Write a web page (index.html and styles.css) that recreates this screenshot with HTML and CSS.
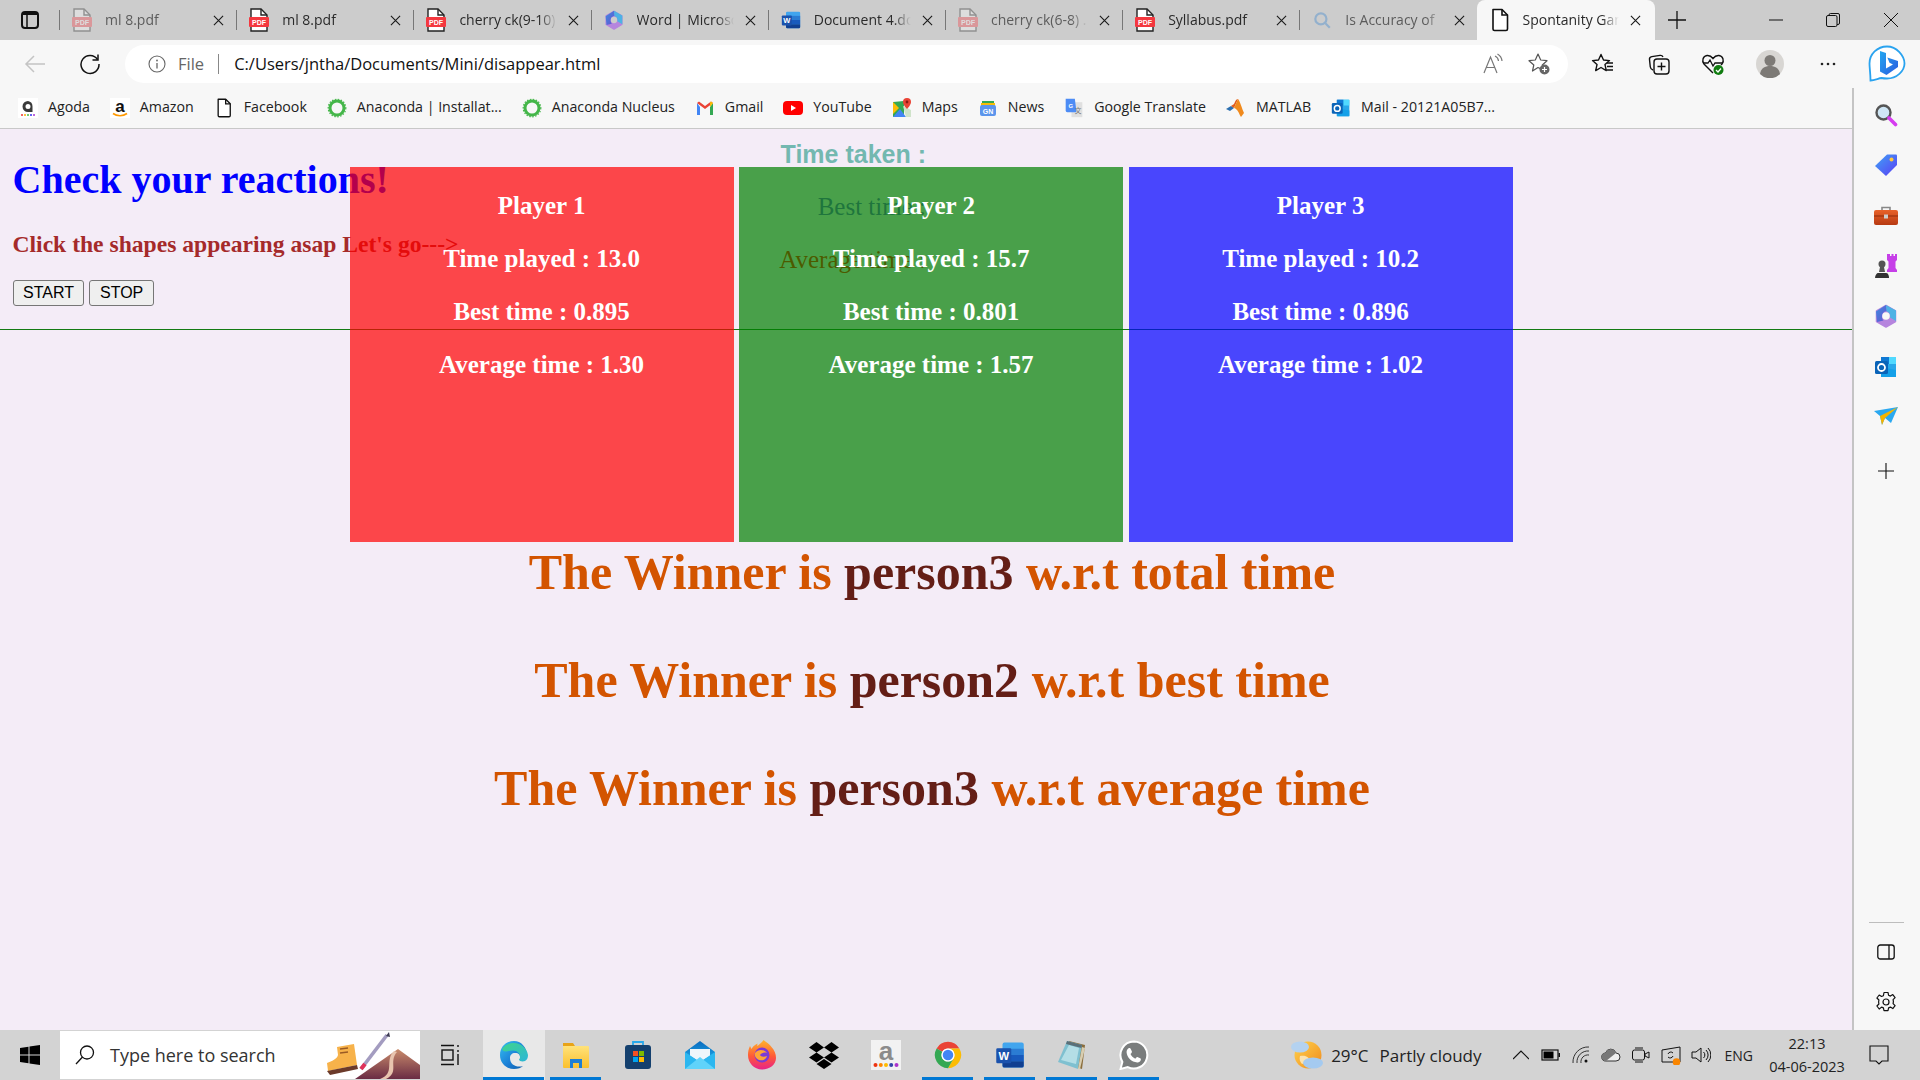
FILE: index.html
```html
<!DOCTYPE html>
<html lang="en">
<head>
<meta charset="utf-8">
<title>Spontanity Game</title>
<link rel="stylesheet" href="styles.css">
</head>
<body>
<svg class="defs" aria-hidden="true">
  <defs>
    <linearGradient id="g-edge" x1="0" y1="0" x2="1" y2="1"><stop offset="0" stop-color="#35c1f1"/><stop offset=".55" stop-color="#1b7fd6"/><stop offset="1" stop-color="#0c59a4"/></linearGradient>
    <linearGradient id="g-edge2" x1="0" y1="0" x2="1" y2="1"><stop offset="0" stop-color="#3fd58a"/><stop offset="1" stop-color="#2bb6d8"/></linearGradient>
    <linearGradient id="g-bing" x1="0" y1="0" x2="1" y2="1"><stop offset="0" stop-color="#22a7f0"/><stop offset="1" stop-color="#2a5be0"/></linearGradient>
    <linearGradient id="g-tag" x1="0" y1="0" x2="1" y2="1"><stop offset="0" stop-color="#3fa4f5"/><stop offset="1" stop-color="#5a3df5"/></linearGradient>
    <linearGradient id="g-box" x1="0" y1="0" x2="0" y2="1"><stop offset="0" stop-color="#e8622a"/><stop offset="1" stop-color="#b73a12"/></linearGradient>
    <linearGradient id="g-fx" x1="0" y1="0" x2="0" y2="1"><stop offset="0" stop-color="#ffb52e"/><stop offset=".55" stop-color="#ff5a36"/><stop offset="1" stop-color="#e8228a"/></linearGradient>
    <linearGradient id="g-mail" x1="0" y1="0" x2="0" y2="1"><stop offset="0" stop-color="#0a6cc0"/><stop offset="1" stop-color="#28c0f5"/></linearGradient>
    <linearGradient id="g-folder" x1="0" y1="0" x2="0" y2="1"><stop offset="0" stop-color="#ffe27a"/><stop offset="1" stop-color="#fbc02d"/></linearGradient>
    <linearGradient id="g-moon" x1="0" y1="0" x2="1" y2="1"><stop offset="0" stop-color="#ffd34d"/><stop offset="1" stop-color="#f08a1d"/></linearGradient>
    <linearGradient id="g-hill" x1="0" y1="0" x2="0" y2="1"><stop offset="0" stop-color="#c98b6b"/><stop offset="1" stop-color="#6a2c44"/></linearGradient>
    <linearGradient id="g-wb" x1="0" y1="0" x2="1" y2="1"><stop offset="0" stop-color="#3a8fe0"/><stop offset="1" stop-color="#6a4fd0"/></linearGradient>
    <symbol id="i-pdf" viewBox="0 0 20 24">
      <path d="M2 1h10l6 6v16H2z" fill="#fff" stroke="#222" stroke-width="1.4"/>
      <path d="M12 1v6h6" fill="none" stroke="#222" stroke-width="1.4"/>
      <rect x="0" y="9" width="20" height="10" rx="1" fill="#f4383f"/>
      <text x="10" y="17" class="pdf-text">PDF</text>
    </symbol>
    <symbol id="i-x" viewBox="0 0 12 12">
      <path d="M1 1l10 10M11 1L1 11" stroke="#1a1a1a" stroke-width="1.2" fill="none"/>
    </symbol>
    <symbol id="i-m365" viewBox="0 0 24 24">
      <path d="M12 1.500l9.500 5.500v10.500L12 23 2.500 17.500V7z" fill="#b685de" stroke="#b685de" stroke-width="1.500" stroke-linejoin="round"/>
      <path d="M2 7.500L12 1l1 6c-3 .2-5 2.500-5 5.500 0 1.500.5 3 1.500 4L3 18z" fill="url(#g-wb)"/>
      <path d="M12 1l10 5.500V17l-6-3.500c.7-3-1-5.700-3.500-6z" fill="#4db2e4"/>
      <circle cx="12" cy="12" r="3.800" fill="currentColor"/>
    </symbol>
    <symbol id="i-outlook" viewBox="0 0 24 24">
      <rect x="7" y="2" width="15" height="20" rx="1" fill="#28a8ea"/>
      <rect x="7" y="2" width="8" height="7" fill="#0f78d4"/>
      <rect x="15" y="2" width="7" height="7" fill="#50d9ff"/>
      <path d="M7 12l15 3v7H7z" fill="#14a0e8"/>
      <rect x="1" y="6" width="13" height="13" rx="1.500" fill="#0a64b8"/>
      <circle cx="7.500" cy="12.500" r="3.500" fill="none" stroke="#fff" stroke-width="1.800"/>
    </symbol>
    <symbol id="i-word" viewBox="0 0 24 24">
      <rect x="6" y="2" width="17" height="20" rx="1.500" fill="#41a5ee"/>
      <rect x="6" y="7" width="17" height="5" fill="#2b7cd3"/>
      <rect x="6" y="12" width="17" height="5" fill="#185abd"/>
      <path d="M6 17h17v3.500a1.500 1.500 0 0 1-1.500 1.500H7.500A1.500 1.500 0 0 1 6 20.500z" fill="#103f91"/>
      <rect x="1" y="6.500" width="12" height="12" rx="1" fill="#1a52ad"/>
      <text x="7" y="16" class="word-text">W</text>
    </symbol>
    <symbol id="i-page" viewBox="0 0 20 24">
      <path d="M3 1.500h9l5.500 5.500v14a1.500 1.500 0 0 1-1.500 1.500H4.500A1.500 1.500 0 0 1 3 21z" fill="#fff" stroke="#111" stroke-width="1.600" stroke-linejoin="round"/>
      <path d="M12 1.500V7h5.500" fill="none" stroke="#111" stroke-width="1.600"/>
    </symbol>
    <symbol id="i-ana" viewBox="0 0 20 20">
      <circle cx="10" cy="10" r="7" fill="none" stroke="#44b649" stroke-width="3"/>
      <circle cx="10" cy="10" r="8.800" fill="none" stroke="#44b649" stroke-width="1.200" stroke-dasharray="1.500 1.500"/>
    </symbol>
  </defs>
</svg>

<header class="tabstrip">
  <div class="tab-actions">
    <svg class="ic18" viewBox="0 0 18 18"><rect x="1" y="1" width="16" height="16" rx="3" fill="none" stroke="#111" stroke-width="2"/><path d="M1 4h16V2.500L15 1H3L1 2.500z" fill="#111"/><path d="M6 4v13" stroke="#111" stroke-width="1.500"/></svg>
  </div>
  <div class="tabs">
    <div class="tab faded"><svg class="tab-ic"><use href="#i-pdf"/></svg><span class="tab-title">ml 8.pdf</span><svg class="tab-x"><use href="#i-x"/></svg></div>
    <div class="tab"><svg class="tab-ic"><use href="#i-pdf"/></svg><span class="tab-title">ml 8.pdf</span><svg class="tab-x"><use href="#i-x"/></svg></div>
    <div class="tab"><svg class="tab-ic"><use href="#i-pdf"/></svg><span class="tab-title">cherry ck(9-10)</span><svg class="tab-x"><use href="#i-x"/></svg></div>
    <div class="tab"><svg class="tab-ic"><use href="#i-m365"/></svg><span class="tab-title">Word | Microsoft</span><svg class="tab-x"><use href="#i-x"/></svg></div>
    <div class="tab"><svg class="tab-ic"><use href="#i-word"/></svg><span class="tab-title">Document 4.docx</span><svg class="tab-x"><use href="#i-x"/></svg></div>
    <div class="tab faded"><svg class="tab-ic"><use href="#i-pdf"/></svg><span class="tab-title">cherry ck(6-8) .</span><svg class="tab-x"><use href="#i-x"/></svg></div>
    <div class="tab"><svg class="tab-ic"><use href="#i-pdf"/></svg><span class="tab-title">Syllabus.pdf</span><svg class="tab-x"><use href="#i-x"/></svg></div>
    <div class="tab faded"><svg class="tab-ic" viewBox="0 0 18 18"><circle cx="8" cy="8" r="5" fill="none" stroke="#2a7fd0" stroke-width="2"/><path d="M12 12l4 4" stroke="#2a7fd0" stroke-width="2"/></svg><span class="tab-title">Is Accuracy of</span><svg class="tab-x"><use href="#i-x"/></svg></div>
    <div class="tab active"><svg class="tab-ic"><use href="#i-page"/></svg><span class="tab-title">Spontanity Game</span><svg class="tab-x"><use href="#i-x"/></svg></div>
  </div>
  <div class="newtab"><svg class="ic18" viewBox="0 0 18 18"><path d="M9 0v18M0 9h18" stroke="#111" stroke-width="1.300"/></svg></div>
  <div class="winctl">
    <div class="winbtn"><svg class="ic14" viewBox="0 0 14 14"><path d="M0 7h14" stroke="#111" stroke-width="1"/></svg></div>
    <div class="winbtn"><svg class="ic14" viewBox="0 0 14 14"><rect x=".5" y="2.500" width="10.500" height="11" rx="1.500" fill="none" stroke="#111"/><path d="M3 2.500V2a1.500 1.500 0 0 1 1.500-1.500H12A1.500 1.500 0 0 1 13.500 2v8a1.500 1.500 0 0 1-1.500 1.500h-1" fill="none" stroke="#111"/></svg></div>
    <div class="winbtn"><svg class="ic14" viewBox="0 0 14 14"><path d="M0 0l14 14M14 0L0 14" stroke="#111" stroke-width="1"/></svg></div>
  </div>
</header>

<nav class="toolbar">
  <div class="tool w54"><svg class="ic22" viewBox="0 0 22 22"><path d="M21 11H2M10 3l-8 8 8 8" fill="none" stroke="#c4c4c4" stroke-width="1.500"/></svg></div>
  <div class="tool w56"><svg class="ic22" viewBox="0 0 22 22"><path d="M18.500 6.500A9 9 0 1 0 20 11" fill="none" stroke="#111" stroke-width="1.500"/><path d="M19 1.500v5.500h-5.500" fill="none" stroke="#111" stroke-width="1.500"/></svg></div>
  <div class="address">
    <svg class="ic18" viewBox="0 0 18 18"><circle cx="9" cy="9" r="8" fill="none" stroke="#666" stroke-width="1.100"/><path d="M9 8v5.500" stroke="#666" stroke-width="1.300"/><circle cx="9" cy="5.500" r=".9" fill="#666"/></svg>
    <span class="file">File</span>
    <span class="addr-sep"></span>
    <span class="url">C:/Users/jntha/Documents/Mini/disappear.html</span>
    <span class="addr-right">
      <svg class="ic22" viewBox="0 0 22 22"><path d="M2 20L8.500 4 15 20M4.500 14.500h8" fill="none" stroke="#777" stroke-width="1.200"/><path d="M13 3a6 6 0 0 1 3.500 5M15.500 1a9 9 0 0 1 4.500 7" fill="none" stroke="#777" stroke-width="1.200"/></svg>
      <svg class="ic24" viewBox="0 0 24 24"><path d="M11 2l2.700 6 6.300.7-4.700 4.300 1 5-.8-.4L11 15.500 5.500 19l1.300-6L2 8.700 8.300 8z" fill="none" stroke="#555" stroke-width="1.200" stroke-linejoin="round"/><circle cx="17.500" cy="17.500" r="5" fill="#666"/><path d="M17.500 15v5M15 17.500h5" stroke="#fff" stroke-width="1.200"/></svg>
    </span>
  </div>
  <div class="tool w70"><svg class="ic24" viewBox="0 0 24 24"><path d="M10 2.500l2.500 5.500 6 .6-4.500 4 1.300 6L10 15.500 4.700 18.600l1.300-6-4.500-4 6-.6z" fill="none" stroke="#111" stroke-width="1.400" stroke-linejoin="round"/><path d="M16 11h6M16 14.500h6M16 18h6" stroke="#111" stroke-width="1.300"/></svg></div>
  <div class="tool w42"><svg class="ic24" viewBox="0 0 24 24"><path d="M6 18c-1.500-.5-2.500-1.500-2.700-3L2.500 7.500C2.300 6 3.300 4.800 4.800 4.600l8.200-1.200c1.300-.2 2.500.5 3 1.600" fill="none" stroke="#111" stroke-width="1.400"/><rect x="7" y="7" width="15" height="15" rx="3" fill="#f7f7f7" stroke="#111" stroke-width="1.400"/><path d="M14.500 10.500v8M10.500 14.500h8" stroke="#111" stroke-width="1.400"/></svg></div>
  <div class="tool w66"><svg class="ic24" viewBox="0 0 24 24"><path d="M12 21L3 12C.5 9 2 4 6 3.500c2.500-.3 4.500 1 6 3 1.500-2 3.500-3.300 6-3 4 .5 5.500 5.500 3 8.500l-1 1" fill="none" stroke="#111" stroke-width="1.400"/><path d="M2 11h5l2-3 3 6 2-3h7" fill="none" stroke="#111" stroke-width="1.300"/><circle cx="17.500" cy="18" r="5" fill="#107c10"/><path d="M15 18l2 2 3-3.500" fill="none" stroke="#fff" stroke-width="1.300"/></svg></div>
  <div class="tool w48"><svg class="ic28" viewBox="0 0 28 28"><circle cx="14" cy="14" r="14" fill="#d8d6d3"/><circle cx="14" cy="10.500" r="5.500" fill="#7d7a76"/><path d="M4 24c1-6 5-8 10-8s9 2 10 8a14 14 0 0 1-20 0z" fill="#7d7a76"/></svg></div>
  <div class="tool w68"><svg class="ic18" viewBox="0 0 18 18"><circle cx="3" cy="9" r="1.300" fill="#222"/><circle cx="9" cy="9" r="1.300" fill="#222"/><circle cx="15" cy="9" r="1.300" fill="#222"/></svg></div>
  <div class="tool w50"><svg class="bing" viewBox="0 0 38 38"><path d="M19 1.500C9.300 1.500 1.500 9 1.500 18.500c0 4.500 1 10 1 17 4-.5 8-2 11-2.500 1.800.4 3.600.5 5.500.5 9.700 0 17.500-7.500 17.500-15S28.700 1.500 19 1.500z" fill="#fff" stroke="#2aa3ef" stroke-width="1.800"/><path d="M12 6l6 2v15.500l7-4-3.500-1.700-2.200-5.300L30 16v6L18.500 30 12 26.500z" fill="url(#g-bing)"/></svg></div>
</nav>

<div class="main">
  <div class="content">
    <div class="bookmarks">
      <a class="bm"><svg class="ic20" viewBox="0 0 20 20"><rect width="20" height="20" fill="#fff"/><path d="M10 3a5.500 5.500 0 1 0 0 11h4.500V8.500A5.500 5.500 0 0 0 10 3zm0 3a2.500 2.500 0 1 1 0 5 2.500 2.500 0 0 1 0-5z" fill="#3a3a3a"/><g><circle cx="4" cy="17" r="1" fill="#e33"/><circle cx="7" cy="17" r="1" fill="#fa0"/><circle cx="10" cy="17" r="1" fill="#4b4"/><circle cx="13" cy="17" r="1" fill="#33e"/><circle cx="16" cy="17" r="1" fill="#a3c"/></g></svg><span>Agoda</span></a>
      <a class="bm"><svg class="ic20" viewBox="0 0 20 20"><rect width="20" height="20" fill="#fff"/><text x="10" y="13.500" class="amz">a</text><path d="M3 15.500c4 3 10 3 14 0" fill="none" stroke="#f90" stroke-width="1.600"/></svg><span>Amazon</span></a>
      <a class="bm"><svg class="ic20"><use href="#i-page"/></svg><span>Facebook</span></a>
      <a class="bm"><svg class="ic20"><use href="#i-ana"/></svg><span>Anaconda | Installat...</span></a>
      <a class="bm"><svg class="ic20"><use href="#i-ana"/></svg><span>Anaconda Nucleus</span></a>
      <a class="bm"><svg class="ic20" viewBox="0 0 20 20"><path d="M2 5v12h3V9z" fill="#4285f4"/><path d="M18 5v12h-3V9z" fill="#34a853"/><path d="M2 5l8 6 8-6-2-1.500L10 8 4 3.500z" fill="#ea4335"/><path d="M15 9l3-4-2-1.500-1 1z" fill="#fbbc04"/></svg><span>Gmail</span></a>
      <a class="bm"><svg class="ic20" viewBox="0 0 20 20"><rect y="3" width="20" height="14" rx="4" fill="#f00"/><path d="M8 7v6l5-3z" fill="#fff"/></svg><span>YouTube</span></a>
      <a class="bm"><svg class="ic20" viewBox="0 0 20 20"><path d="M1 4l11-1v14L1 19z" fill="#34a853"/><path d="M1 19l7-8 6 8z" fill="#4285f4"/><path d="M1 4l6 6-6 6z" fill="#fbbc04"/><path d="M11 8l3 11h5V12z" fill="#cfe3c9"/><path d="M15 0a4 4 0 0 1 4 4c0 3-4 7-4 7s-4-4-4-7a4 4 0 0 1 4-4z" fill="#ea4335"/><circle cx="15" cy="4" r="1.400" fill="#8a1c12"/></svg><span>Maps</span></a>
      <a class="bm"><svg class="ic20" viewBox="0 0 20 20"><path d="M4 3h12v4H4z" fill="#34a853"/><path d="M3 5h14v3H3z" fill="#fbbc04"/><rect x="2" y="7" width="16" height="11" rx="2" fill="#5c95ec"/><text x="10" y="15.500" class="gn">GN</text></svg><span>News</span></a>
      <a class="bm"><svg class="ic20" viewBox="0 0 20 24"><rect x="7" y="5" width="13" height="18" fill="#e0e0e0"/><path d="M0 1h11l2 16H2a2 2 0 0 1-2-2z" fill="#4d8cf5"/><text x="6" y="12" class="gn">G</text><text x="15" y="18" class="gt">文</text></svg><span>Google Translate</span></a>
      <a class="bm"><svg class="ic20" viewBox="0 0 20 20"><path d="M0 11l5-3 3 2-4 3z" fill="#2b6fb0"/><path d="M5 8l3 2 4-9c-2 0-3 3-4 5z" fill="#e05a1c"/><path d="M12 1c2 2 4 10 6 14l-3 4c-2-3-3-8-7-9z" fill="#f08a1d"/></svg><span>MATLAB</span></a>
      <a class="bm"><svg class="ic20"><use href="#i-outlook"/></svg><span>Mail - 20121A05B7...</span></a>
    </div>

    <main class="page">
      <section class="head">
        <div class="intro">
          <h1 class="title">Check your reactions!</h1>
          <p class="sub">Click the shapes appearing asap Let's go---&gt;</p>
          <div class="btns"><button class="btn">START</button><button class="btn">STOP</button></div>
        </div>
        <div class="stats">
          <p class="stat-taken">Time taken :</p>
          <p class="stat-best">Best time :</p>
          <p class="stat-avg">Average time :</p>
        </div>
      </section>
      <section class="winners">
        <p class="winner">The Winner is <span class="who">person3</span> w.r.t total time</p>
        <p class="winner">The Winner is <span class="who">person2</span> w.r.t best time</p>
        <p class="winner">The Winner is <span class="who">person3</span> w.r.t average time</p>
      </section>
      <section class="cards">
        <div class="card red"><p>Player 1</p><p>Time played : 13.0</p><p>Best time : 0.895</p><p>Average time : 1.30</p></div>
        <div class="card green"><p>Player 2</p><p>Time played : 15.7</p><p>Best time : 0.801</p><p>Average time : 1.57</p></div>
        <div class="card blue"><p>Player 3</p><p>Time played : 10.2</p><p>Best time : 0.896</p><p>Average time : 1.02</p></div>
      </section>
    </main>
  </div>

  <aside class="sidebar">
    <div class="side-top">
      <div class="side"><svg class="ic24" viewBox="0 0 24 24"><circle cx="9.500" cy="9.500" r="7" fill="#cfe6f5" stroke="#555" stroke-width="2.400"/><path d="M15 15l6.500 6.500" stroke="#d63cf0" stroke-width="3.600" stroke-linecap="round"/></svg></div>
      <div class="side"><svg class="ic24" viewBox="0 0 24 24"><path d="M13 1.500h9a1 1 0 0 1 1 1V12L12 23 1 13z" fill="url(#g-tag)"/><circle cx="17.500" cy="6.500" r="2" fill="#ffc83d"/></svg></div>
      <div class="side"><svg class="ic24" viewBox="0 0 24 24"><path d="M8 7V3.500h8V7" fill="none" stroke="#888" stroke-width="1.600"/><rect y="6" width="24" height="15" rx="2" fill="url(#g-box)"/><path d="M0 12h24" stroke="#8f2c0c"/><rect x="10" y="10.500" width="4" height="4" fill="#ccc"/></svg></div>
      <div class="side"><svg class="ic24" viewBox="0 0 24 24"><path d="M14 1h2v2h1.500V1h2v2H21V1h2v6l-1.500 1.500V15l1.500 2v2H13v-2l1.500-2V8.500L13 7V1z" fill="#c63fe8" transform="translate(0 -1)"/><circle cx="8" cy="10" r="3.500" fill="#555"/><path d="M6 13h4l1 5H5z" fill="#555"/><path d="M1 24c0-3 2-5 3-5h8c2 0 3 2 3 5z" fill="#333"/></svg></div>
      <div class="side"><svg class="ic24"><use href="#i-m365"/></svg></div>
      <div class="side"><svg class="ic24"><use href="#i-outlook"/></svg></div>
      <div class="side"><svg class="ic24" viewBox="0 0 24 24"><path d="M0 6l24-4-7 16-6-5-3 7-2-9z" fill="#2aa8f0"/><path d="M6 11l18-9-13 11-3 7z" fill="#f4b400"/></svg></div>
      <div class="side"><svg class="ic16" viewBox="0 0 16 16"><path d="M8 0v16M0 8h16" stroke="#111" stroke-width="1.100"/></svg></div>
    </div>
    <div class="side-bottom">
      <div class="side-line"></div>
      <div class="side"><svg class="ic18" viewBox="0 0 18 18"><rect x=".8" y="2" width="16.400" height="14" rx="2.500" fill="none" stroke="#111" stroke-width="1.300"/><path d="M12 2v14" stroke="#111" stroke-width="1.300"/></svg></div>
      <div class="side"><svg class="ic22" viewBox="0 0 22 22"><circle cx="11" cy="11" r="3" fill="none" stroke="#111" stroke-width="1.200"/><path d="M9 1.500h4l.6 2.800 1.800.8 2.400-1.500 2.300 3-2 2 .3 2-.3 2 2 2-2.300 3-2.400-1.500-1.800.8-.6 2.800H9l-.6-2.800-1.800-.8L4.200 18l-2.300-3 2-2-.3-2 .3-2-2-2 2.300-3 2.400 1.500 1.800-.8z" fill="none" stroke="#111" stroke-width="1.200" stroke-linejoin="round"/></svg></div>
    </div>
  </aside>
</div>

<footer class="taskbar">
  <div class="start"><svg class="ic20" viewBox="0 0 20 20"><path d="M0 3l8.500-1.300V9.500H0zM9.500 1.500L20 0v9.500H9.500zM0 10.500h8.500v7.800L0 17zM9.500 10.500H20V20L9.500 18.500z" fill="#000"/></svg></div>
  <div class="search">
    <svg class="ic22" viewBox="0 0 22 22"><circle cx="13" cy="8.500" r="6.500" fill="none" stroke="#111" stroke-width="1.300"/><path d="M8.500 13L2 20" stroke="#111" stroke-width="1.300"/></svg>
    <span class="search-text">Type here to search</span>
    <svg class="search-art" viewBox="0 0 100 48">
      <path d="M35 48L78 18l22 16v14z" fill="url(#g-hill)"/>
      <path d="M60 48c16-6 4-18 14-28l3 1c-9 10 3 20-11 27z" fill="#e8c4ae"/>
      <path d="M67 4L41 38" stroke="#a39cc0" stroke-width="3.600"/>
      <path d="M45 33l-4 5" stroke="#e0325a" stroke-width="4"/>
      <path d="M66 5l3-4 1 5z" fill="#3c3a52"/>
      <path d="M17 16l17-3 3 21-29 6-1-8c5-2 10-4 11-8z" fill="#f7b24a"/>
      <path d="M7 40l30-6 1 4-28 6z" fill="#6b3a2a"/>
      <path d="M20 18l8-1M20 22l8-1" stroke="#9a5a24" stroke-width="1.400"/>
    </svg>
  </div>
  <div class="taskview"><svg class="ic22" viewBox="0 0 22 22"><path d="M1 1.500h13M1 20.500h13M18 1v2M18 6v2M18 10v11" stroke="#111" stroke-width="1.400"/><rect x="2" y="6" width="11" height="10" fill="none" stroke="#111" stroke-width="1.400"/></svg></div>
  <div class="apps">
    <div class="app on tile"><svg class="ic30" viewBox="0 0 30 30"><path d="M15 1C7 1 1 7 1 15c0 8 6 14 14 14 4 0 7-1 9-3-6 2-13-1-13-8 0-3 2-5 5-5 4 0 5 2 5 4l7-1C28 7 22 1 15 1z" fill="url(#g-edge)"/><path d="M3 9c3-5 8-6 12-6 7 0 13 5 14 12 0 3-1 5-3 6-2 1-6 .5-6-1.500 1-1 1-2 1-3 0-3-3-6-7-6-5 0-9 3-11-1.500z" fill="url(#g-edge2)"/></svg></div>
    <div class="app on"><svg class="ic30" viewBox="0 0 30 30"><path d="M2 3h10l2 3H2z" fill="#e8a317"/><rect x="2" y="6" width="26" height="22" rx="1" fill="url(#g-folder)"/><path d="M9 28v-9h12v9h-3v-5h-6v5z" fill="#1f7fd4"/></svg></div>
    <div class="app"><svg class="ic30" viewBox="0 0 30 30"><path d="M10 6V2h10v4" fill="none" stroke="#28a8ea" stroke-width="1.800"/><rect x="2" y="5" width="26" height="24" rx="3" fill="#14406e"/><rect x="10" y="11" width="5" height="5" fill="#f25022"/><rect x="16" y="11" width="5" height="5" fill="#7fba00"/><rect x="10" y="17" width="5" height="5" fill="#00a4ef"/><rect x="16" y="17" width="5" height="5" fill="#ffb900"/></svg></div>
    <div class="app"><svg class="ic30" viewBox="0 0 30 30"><path d="M0 12L15 1l15 11v17H0z" fill="url(#g-mail)"/><path d="M5 9h20v7l-10 6-10-6z" fill="#eef6fb"/><path d="M0 12l15 10 15-10v17H0z" fill="#2bb7f0"/><path d="M0 29l15-12 15 12z" fill="#60d3fa"/></svg></div>
    <div class="app"><svg class="ic30" viewBox="0 0 30 30"><path d="M15 29.500C7 29.500 1 23 1 15c0-3 .5-6 2-9l1.500 3c1-2 3-4 6-5.500 0 1-.5 2 0 2.500 2-2 5-4 6-6 3 2.500 6 4 8 7 3 3 4.500 7 4.500 11 0 6.500-6 11.500-14 11.500z" fill="url(#g-fx)"/><circle cx="15" cy="15" r="7.500" fill="#7b3ad6"/><path d="M8 13c3-4 9-4 12 0-3-1-6 0-7 2 1 2 4 2 7 1-1 4-5 5-8 4-3-1-5-4-4-7z" fill="#ffa436"/></svg></div>
    <div class="app"><svg class="ic30" viewBox="0 0 30 30"><path d="M7.500 2L0 7.500l7.500 5 7.500-5zM22.500 2L15 7.500l7.500 5 7.500-5zM0 17.500l7.500 5 7.500-5-7.500-5zM22.500 12.500l-7.500 5 7.500 5 7.500-5zM7.500 24l7.500 5 7.500-5-7.500-5z" fill="#000"/></svg></div>
    <div class="app"><svg class="ic30" viewBox="0 0 30 30"><rect width="30" height="30" fill="#f2f2f2"/><text x="15" y="20" class="amz-big">a</text><circle cx="4.500" cy="25" r="2" fill="#e31"/><circle cx="9.800" cy="25" r="2" fill="#f80"/><circle cx="15" cy="25" r="2" fill="#fb0"/><circle cx="20.200" cy="25" r="2" fill="#34a"/><circle cx="25.500" cy="25" r="2" fill="#a3c"/></svg></div>
    <div class="app on"><svg class="ic30" viewBox="0 0 24 24"><path d="M12 1.500a10.500 10.500 0 0 1 9.100 5.250H12a5.250 5.250 0 0 0-4.550 2.630L2.900 6.750A10.500 10.500 0 0 1 12 1.500z" fill="#ea4335"/><path d="M21.100 6.750A10.500 10.500 0 0 1 12 22.500l4.550-7.870A5.250 5.250 0 0 0 12 6.750z" fill="#fbbc04"/><path d="M2.900 6.750A10.500 10.500 0 0 0 12 22.500l4.550-7.870a5.250 5.250 0 0 1-9.100-5.250z" fill="#34a853"/><circle cx="12" cy="12" r="5.250" fill="#fff"/><circle cx="12" cy="12" r="4.200" fill="#4285f4"/></svg></div>
    <div class="app on"><svg class="ic30"><use href="#i-word"/></svg></div>
    <div class="app on"><svg class="ic30" viewBox="0 0 30 30"><path d="M12 1l16 4-3 24-6-2z" fill="#8a6d3b"/><path d="M10 1l15 4-4 24L1 22z" fill="#7fc0d0"/><path d="M4 20l8-15 10 3-3 16z" fill="#b4dee6"/><path d="M10 1l15 4-.5 3L9 4z" fill="#5b6f78"/><path d="M21 29l4-22 3 1-5 21z" fill="#d8cdb0"/></svg></div>
    <div class="app on"><svg class="ic30" viewBox="0 0 30 30"><path d="M15 1.500a13.500 13.500 0 0 0-11.600 20.400L1.500 29l7.300-1.900A13.500 13.500 0 1 0 15 1.500z" fill="#7a7d7d" stroke="#fff" stroke-width="2"/><path d="M10 8c1 0 1.500.2 2 1.500l.9 2.100c.2.500 0 1-.6 1.600l-.8.900c1 2 2.500 3.500 4.800 4.600l1-1.100c.5-.6 1-.7 1.600-.4l2.300 1.100c.7.400.8.800.6 1.700-.4 1.600-2 2.600-3.600 2.400C12.500 22 8 17.500 7.600 12.500 7.400 10.500 8.500 8.500 10 8z" fill="#fff"/></svg></div>
  </div>
  <div class="tray">
    <svg class="weather" viewBox="0 0 32 28"><circle cx="17" cy="14" r="13.500" fill="url(#g-moon)"/><path d="M9 15c4-1 9 0 10 5l-8 3c-2-2-3-5-2-8z" fill="#fbe3b0"/><ellipse cx="9" cy="6" rx="9" ry="5.500" fill="#b4d2f0"/><ellipse cx="22" cy="22" rx="10" ry="5.500" fill="#a4caf0"/></svg>
    <span class="temp">29°C</span>
    <span class="cond">Partly cloudy</span>
    <div class="tray-cell"><svg class="ic16" viewBox="0 0 16 16"><path d="M0 12l8-8 8 8" fill="none" stroke="#111" stroke-width="1.200"/></svg></div>
    <div class="tray-cell"><svg class="ic20" viewBox="0 0 20 20"><rect x="1" y="5" width="16" height="10" fill="none" stroke="#111" stroke-width="1.200"/><rect x="2.500" y="6.500" width="10" height="7" fill="#000"/><rect x="17.500" y="8" width="1.500" height="4" fill="#111"/></svg></div>
    <div class="tray-cell"><svg class="ic20" viewBox="0 0 20 20"><path d="M2 18A15 15 0 0 1 18 2M6 18A11 11 0 0 1 18 6M10 18a7 7 0 0 1 8-8" fill="none" stroke="#333" stroke-width="1"/><circle cx="15" cy="16" r="1.500" fill="#111"/></svg></div>
    <div class="tray-cell"><svg class="ic20" viewBox="0 0 20 20"><path d="M5 16a4 4 0 0 1-.5-8 5.500 5.500 0 0 1 10.500 0 4 4 0 0 1 0 8z" fill="#eee" stroke="#333"/><path d="M5 16a4 4 0 0 1-.5-8 5.500 5.500 0 0 1 10.500 0z" fill="#777"/></svg></div>
    <div class="tray-cell"><svg class="ic20" viewBox="0 0 20 20"><path d="M4 3h8M4 17h8" stroke="#111"/><rect x="1.500" y="5" width="12" height="10" rx="2" fill="none" stroke="#111"/><path d="M14 9l4-2v6l-4-2z" fill="none" stroke="#111"/></svg></div>
    <div class="tray-cell"><svg class="ic20" viewBox="0 0 20 20"><path d="M1 5l18-3v15H1z" fill="none" stroke="#111"/><path d="M12 8a3 3 0 0 0-5 1m0 3a3 3 0 0 0 5-1" fill="none" stroke="#111"/><circle cx="15.500" cy="17" r="3.800" fill="#f98500"/></svg></div>
    <div class="tray-cell"><svg class="ic20" viewBox="0 0 20 20"><path d="M1 7h4l5-4v14l-5-4H1z" fill="none" stroke="#111"/><path d="M12.500 7a4 4 0 0 1 0 6M15 5a7 7 0 0 1 0 10M17 3a10 10 0 0 1 0 14" fill="none" stroke="#111"/></svg></div>
    <span class="lang">ENG</span>
    <div class="clock"><span>22:13</span><span>04-06-2023</span></div>
    <div class="notif"><svg class="ic20" viewBox="0 0 20 20"><path d="M1 1h18v15h-6l-3 3-3-3H1z" fill="none" stroke="#111" stroke-width="1.100"/></svg></div>
  </div>
</footer>
</body>
</html>
```

FILE: styles.css
```css
* { box-sizing: border-box; }
html, body { margin: 0; height: 100%; }
body {
  width: 1920px;
  height: 1080px;
  overflow: hidden;
  display: flex;
  flex-direction: column;
  font-family: "Open Sans", "Noto Sans", sans-serif;
  color: #1a1a1a;
  background: #f4ecf7;
}
.defs { width: 0; height: 0; display: block; flex: none; }
p, h1 { margin: 0; }
svg { display: block; flex: none; }
.ic14 { width: 14px; height: 14px; }
.ic16 { width: 16px; height: 16px; }
.ic18 { width: 18px; height: 18px; }
.ic20 { width: 20px; height: 20px; }
.ic22 { width: 22px; height: 22px; }
.ic24 { width: 24px; height: 24px; }
.ic28 { width: 28px; height: 28px; }
.ic30 { width: 30px; height: 30px; }

.pdf-text { font: bold 7px "Liberation Sans", sans-serif; fill: #fff; text-anchor: middle; }
.word-text { font: bold 9px "Liberation Sans", sans-serif; fill: #fff; text-anchor: middle; }
.amz { font: bold 17px "Liberation Sans", sans-serif; fill: #111; text-anchor: middle; }
.amz-big { font: bold 26px "Liberation Sans", sans-serif; fill: #8b8b8b; text-anchor: middle; }
.gn { font: bold 7px "Liberation Sans", sans-serif; fill: #fff; text-anchor: middle; }
.gt { font: 8px "Noto Sans CJK SC", sans-serif; fill: #777; text-anchor: middle; }

/* tab strip */
.tabstrip { flex: none; height: 40px; background: #cccccc; display: flex; align-items: stretch; }
.tab-actions { width: 59px; display: flex; align-items: center; justify-content: center; }
.tabs { display: flex; width: 1596px; }
.tab {
  width: 177.2px;
  position: relative;
  display: flex;
  align-items: center;
  padding: 0 12px 0 13px;
  font-size: 14px;
  color: #2a2a2a;
  color: #2a2a2a;
}
.tab::before {
  content: "";
  position: absolute;
  left: 0;
  top: 10px;
  bottom: 10px;
  width: 1px;
  background: #777;
}
.tab-ic { width: 20px; height: 24px; color: #ccc; }
.tab-title {
  margin-left: 13px;
  margin-bottom: 2px;
  flex: 1;
  white-space: nowrap;
  overflow: hidden;
  -webkit-mask-image: linear-gradient(90deg, #000 82%, transparent);
  mask-image: linear-gradient(90deg, #000 82%, transparent);
}
.tab-x { width: 11px; height: 11px; margin-left: 11px; }
.tab.faded .tab-ic { opacity: .35; }
.tab.faded .tab-title { color: #5c5c5c; }
.tab.active {
  width: 178px;
  padding-right: 14px;
  background: #f7f7f7;
  border-radius: 8px 8px 0 0;
}
.tab.active::before { display: none; }
.newtab { width: 44px; display: flex; align-items: center; justify-content: center; }
.winctl { margin-left: auto; display: flex; width: 173px; }
.winbtn { width: 57.500px; display: flex; align-items: center; justify-content: center; }

/* toolbar */
.toolbar { flex: none; height: 48px; background: #f7f7f7; display: flex; align-items: center; padding-left: 8px; }
.tool { display: flex; align-items: center; justify-content: center; height: 38px; }
.w54 { width: 54px; }
.w56 { width: 56px; }
.w70 { width: 70px; }
.w42 { width: 42px; }
.w66 { width: 66px; }
.w48 { width: 48px; }
.w68 { width: 68px; }
.w50 { width: 50px; }
.bing { width: 38px; height: 38px; }
.address {
  margin-left: 7px;
  width: 1443px;
  height: 38px;
  border-radius: 19px;
  background: #fff;
  display: flex;
  align-items: center;
  padding: 0 17px 0 23px;
  font-size: 16.5px;
}
.file { margin-left: 12px; color: #666; margin-bottom: 2px; }
.addr-sep { width: 1px; height: 20px; background: #888; margin: 0 15px 0 14px; }
.url { color: #111; white-space: nowrap; margin-bottom: 2px; }
.addr-right { margin-left: auto; display: flex; align-items: center; gap: 23px; }

/* main area */
.main { flex: 1; display: flex; min-height: 0; }
.content { width: 1852px; display: flex; flex-direction: column; }
.bookmarks {
  flex: none;
  height: 41px;
  background: #f7f7f7;
  border-bottom: 1px solid #c8c8c8;
  display: flex;
  align-items: center;
  gap: 20px;
  padding-left: 18px;
  font-size: 14.2px;
  white-space: nowrap;
}
.bm { display: flex; align-items: center; gap: 10px; color: #222; }
.bm span { margin-bottom: 3px; }

.page { flex: 1; position: relative; background: #f4ecf7; font-family: "Liberation Serif", serif; }
.head {
  height: 201px;
  border-bottom: 1px solid #137a13;
  display: grid;
  grid-template-columns: 600px 326px;
}
.intro { padding: 28px 0 0 12.500px; }
.title { font-size: 40px; line-height: 46px; color: #0000ff; font-weight: 700; white-space: nowrap; }
.sub { margin-top: 27px; font-size: 23.6px; line-height: 28px; font-weight: 700; color: #a52a2a; white-space: nowrap; }
.btns { display: flex; gap: 5px; margin-top: 22px; }
.btn {
  height: 26px;
  padding: 0 9.500px;
  font: 16px "Liberation Sans", sans-serif;
  color: #000;
  background: #efefef;
  border: 1px solid #767676;
  border-radius: 3px;
}
.stats { padding-top: 11px; text-align: right; font-size: 25px; line-height: 28px; white-space: nowrap; }
.stats p { margin-bottom: 25px; }
.stat-taken { font-family: "Liberation Sans", sans-serif; font-weight: 700; color: #73b8b0; }
.stat-best { color: #6a5acd; }
.stat-avg { color: #ff0000; }

.winners { padding: 214px 0 0 12px; text-align: center; }
.winner { font-size: 50px; line-height: 56px; margin-bottom: 52px; font-weight: 700; color: #d35400; white-space: nowrap; }
.who { color: #641e16; }

.cards {
  position: absolute;
  left: 349.600px;
  top: 38px;
  width: 1163px;
  display: grid;
  grid-template-columns: repeat(3, 1fr);
  gap: 5.500px;
}
.card { height: 375px; padding-top: 25px; text-align: center; color: #fff; font-weight: 700; font-size: 25px; line-height: 28px; }
.card p { margin-bottom: 25px; }
.red { background: rgba(255, 0, 0, .7); }
.green { background: rgba(0, 128, 0, .7); }
.blue { background: rgba(0, 0, 255, .7); }

/* sidebar */
.sidebar {
  flex: 1;
  background: #f7f7f7;
  border-left: 2px solid #c4c4c4;
  display: flex;
  flex-direction: column;
  justify-content: space-between;
  align-items: center;
  padding: 2px 2px 3px 0;
  color: #f7f7f7;
}
.side { width: 40px; height: 50.300px; display: flex; align-items: center; justify-content: center; }
.side-top { display: flex; flex-direction: column; align-items: center; }
.side-top .side:last-child { margin-top: 4px; }
.side-bottom { display: flex; flex-direction: column; align-items: center; }
.side-line { width: 35px; height: 1px; background: #bdbdbd; margin-bottom: 3px; }

/* taskbar */
.taskbar { flex: none; height: 50px; background: #d3d3d3; display: flex; align-items: stretch; }
.start { width: 60px; display: flex; align-items: center; justify-content: center; }
.search {
  width: 360px;
  margin: 1px 0;
  background: #fff;
  display: flex;
  align-items: center;
  padding-left: 14px;
  position: relative;
  overflow: hidden;
  font-size: 18px;
}
.search-text { margin-left: 14px; color: #333; }
.search-art { position: absolute; right: 0; bottom: 0; width: 100px; height: 48px; }
.taskview { width: 62.500px; display: flex; align-items: center; justify-content: center; }
.apps { display: flex; }
.app { width: 62px; display: flex; align-items: center; justify-content: center; position: relative; }
.app.on::after {
  content: "";
  position: absolute;
  left: 5.500px;
  right: 5.500px;
  bottom: 0;
  height: 3px;
  background: #0078d4;
}
.app.on.tile { background: #e8e8e8; }
.app.on.tile::after { left: 0; right: 1px; }
.tray {
  margin-left: auto;
  display: flex;
  align-items: center;
  font-size: 17px;
  color: #222;
}
.weather { width: 32px; height: 28px; margin-right: 8px; }
.temp { margin-right: 11px; }
.cond { margin-right: 24px; }
.tray-cell { width: 30px; display: flex; align-items: center; justify-content: center; }
.lang { margin-left: 9px; font-size: 14px; }
.clock { width: 108px; display: flex; flex-direction: column; align-items: center; font-size: 14.5px; line-height: 23px; }
.notif { width: 59px; display: flex; align-items: center; justify-content: center; padding-right: 23px; }
```
